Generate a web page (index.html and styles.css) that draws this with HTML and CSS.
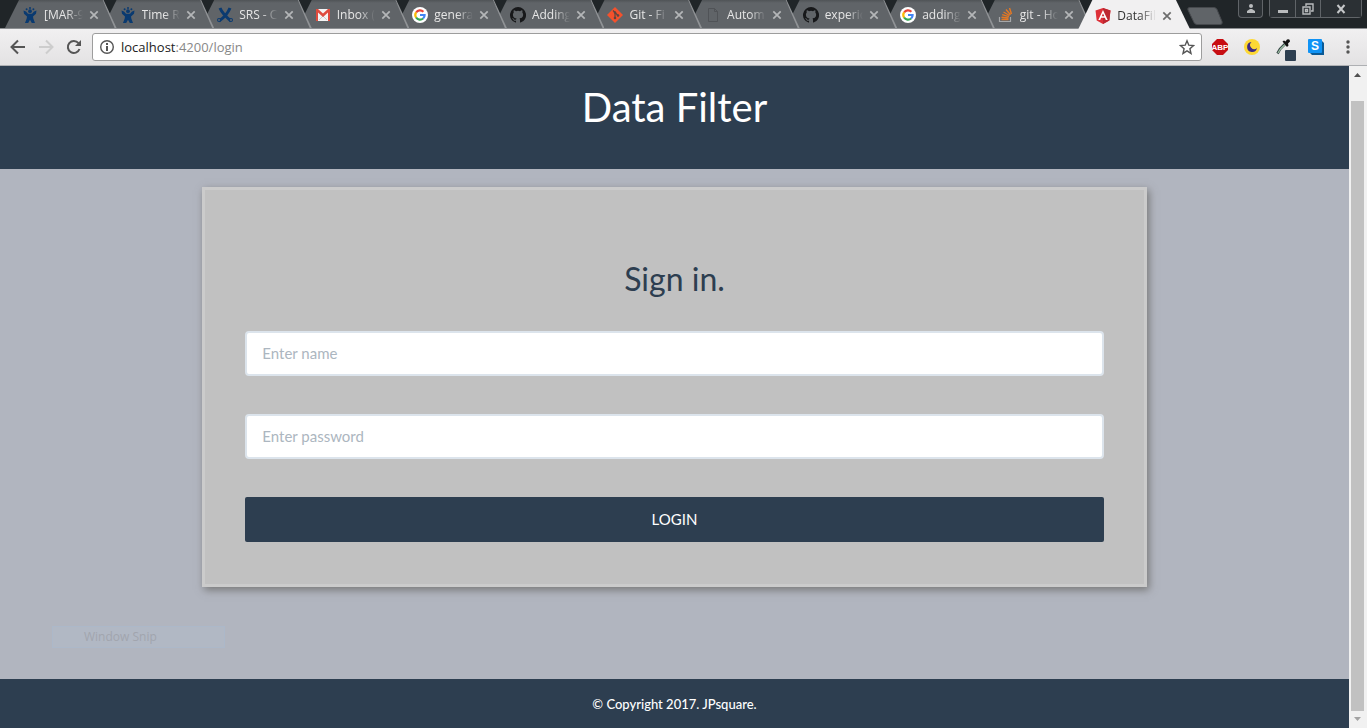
FILE: index.html
```html
<!DOCTYPE html>
<html lang="en">
<head>
<meta charset="utf-8">
<title>DataFilter</title>
<link rel="stylesheet" href="styles.css">
</head>
<body class="window">
<svg class="sprites" aria-hidden="true">
  <symbol id="jira" viewBox="0 0 16 16"><g fill="#0a3a70"><circle cx="8" cy="4.200" r="1.900"/><circle cx="4.600" cy="2.300" r="1"/><circle cx="8" cy="1" r="1"/><circle cx="11.400" cy="2.300" r="1"/><path d="M1.500 3.500L4 4.500l2 2.300h4l2-2.300 2.500-1-.5 3.200L11 9.500l.3 2L13 16h-3.200L8 12.800 6.200 16H3l1.700-4.500.3-2L2 6.700z"/></g></symbol>
  <symbol id="confluence" viewBox="0 0 16 16"><g fill="none" stroke="#0a3a70" stroke-width="3"><path d="M3 1c2 5 5 8 11 13M13 1C11 6 8 10 2 14"/></g><circle cx="2" cy="13" r="2" fill="#0a3a70"/><circle cx="14" cy="13" r="2" fill="#0a3a70"/><circle cx="2" cy="13" r="1" fill="#606468"/><circle cx="14" cy="13" r="1" fill="#606468"/></symbol>
  <symbol id="gmail" viewBox="0 0 16 16"><path fill="#f4f4f4" d="M1 2h14v12H1z"/><path fill="none" stroke="#ccc" d="M4 13l4-4 4 4"/><path fill="#df4b3e" d="M1 2h2l5 4.500L13 2h2v12h-2V5.500L8 10 3 5.500V14H1z"/></symbol>
  <symbol id="google" viewBox="0 0 16 16"><circle cx="8" cy="8" r="8" fill="#fff"/><g fill="none" stroke-width="2.200"><path stroke="#ea4335" d="M4.100 5.500A4.700 4.700 0 0 1 11.400 4.800"/><path stroke="#fbbc05" d="M4.100 10.600A4.700 4.700 0 0 1 4.100 5.400"/><path stroke="#34a853" d="M4.100 10.500A4.700 4.700 0 0 0 11.100 11.500"/><path stroke="#4285f4" d="M11.100 11.500A4.500 4.500 0 0 0 12.600 8H8"/></g></symbol>
  <symbol id="github" viewBox="0 0 16 16"><path fill="#17181a" fill-rule="evenodd" d="M8 0a8 8 0 0 0-2.530 15.590c.4.070.55-.17.550-.38v-1.490c-2.230.48-2.700-.95-2.700-.95-.36-.92-.89-1.170-.89-1.170-.73-.5.060-.49.060-.49.810.06 1.230.83 1.230.83.720 1.230 1.880.87 2.340.67.070-.52.280-.87.510-1.070-1.780-.2-3.640-.89-3.640-3.950 0-.87.310-1.590.82-2.150-.08-.2-.36-1.020.08-2.120 0 0 .67-.21 2.200.82a7.600 7.600 0 0 1 4 0c1.530-1.040 2.200-.82 2.200-.82.44 1.100.16 1.920.08 2.120.51.560.82 1.270.82 2.150 0 3.070-1.870 3.750-3.650 3.950.29.250.54.730.54 1.480v2.200c0 .21.150.46.550.38A8 8 0 0 0 8 0z"/></symbol>
  <symbol id="git" viewBox="0 0 16 16"><path fill="#f4512c" d="M8 0l8 8-8 8-8-8z"/><path fill="none" stroke="#5d4540" stroke-width="1.200" d="M6 3.500l2 2v6M8 5.500l3 3"/><circle cx="8" cy="5.500" r="1.200" fill="#5d4540"/><circle cx="8" cy="11" r="1.300" fill="#5d4540"/><circle cx="11" cy="8.500" r="1.300" fill="#5d4540"/></symbol>
  <symbol id="file" viewBox="0 0 16 16"><path fill="none" stroke="#505357" d="M3.500 1.500h6l3 3v10h-9zM9.500 1.500v3h3"/></symbol>
  <symbol id="stack" viewBox="0 0 16 16"><path fill="none" stroke="#a5a7a9" stroke-width="1.200" d="M1.500 10v4.500h11V10"/><path fill="none" stroke="#e47824" stroke-width="1.400" d="M3.500 12.500h7M3.500 10.200l7 .8M4.200 7.600l6.700 2M5.500 5l6 3.500M8 2.500l4.500 5.300M11.500 1l2 6"/></symbol>
  <symbol id="angular" viewBox="0 0 16 16"><path fill="#dd3038" d="M8 0l7.500 2.600-1.200 10L8 16l-6.300-3.400-1.200-10z"/><path fill="#bd2731" d="M8 0l7.500 2.600-1.200 10L8 16z"/><path fill="#fff" fill-rule="evenodd" d="M8 2l4.700 10h-1.900l-.9-2.300H6.100L5.200 12H3.300zm0 3.500L6.700 8.300h2.600z"/></symbol>
  <symbol id="cross" viewBox="0 0 10 10"><path fill="none" stroke="currentColor" stroke-width="1.700" d="M1.300 1.300l7.400 7.400M8.700 1.300L1.300 8.700"/></symbol>
</svg>

<header class="titlebar">
  <nav class="tabs" aria-label="Tabs">
    <div class="tab"><svg class="favicon"><use href="#jira"/></svg><span class="tab-title">[MAR-9</span><button class="close" aria-label="Close"><svg><use href="#cross"/></svg></button></div>
    <div class="tab"><svg class="favicon"><use href="#jira"/></svg><span class="tab-title">Time R</span><button class="close" aria-label="Close"><svg><use href="#cross"/></svg></button></div>
    <div class="tab"><svg class="favicon"><use href="#confluence"/></svg><span class="tab-title">SRS - C</span><button class="close" aria-label="Close"><svg><use href="#cross"/></svg></button></div>
    <div class="tab"><svg class="favicon"><use href="#gmail"/></svg><span class="tab-title">Inbox (</span><button class="close" aria-label="Close"><svg><use href="#cross"/></svg></button></div>
    <div class="tab"><svg class="favicon"><use href="#google"/></svg><span class="tab-title">genera</span><button class="close" aria-label="Close"><svg><use href="#cross"/></svg></button></div>
    <div class="tab"><svg class="favicon"><use href="#github"/></svg><span class="tab-title">Adding</span><button class="close" aria-label="Close"><svg><use href="#cross"/></svg></button></div>
    <div class="tab"><svg class="favicon"><use href="#git"/></svg><span class="tab-title">Git - Fi</span><button class="close" aria-label="Close"><svg><use href="#cross"/></svg></button></div>
    <div class="tab"><svg class="favicon"><use href="#file"/></svg><span class="tab-title">Autom</span><button class="close" aria-label="Close"><svg><use href="#cross"/></svg></button></div>
    <div class="tab"><svg class="favicon"><use href="#github"/></svg><span class="tab-title">experic</span><button class="close" aria-label="Close"><svg><use href="#cross"/></svg></button></div>
    <div class="tab"><svg class="favicon"><use href="#google"/></svg><span class="tab-title">adding</span><button class="close" aria-label="Close"><svg><use href="#cross"/></svg></button></div>
    <div class="tab"><svg class="favicon"><use href="#stack"/></svg><span class="tab-title">git - Ho</span><button class="close" aria-label="Close"><svg><use href="#cross"/></svg></button></div>
    <div class="tab active"><svg class="favicon"><use href="#angular"/></svg><span class="tab-title">DataFil</span><button class="close" aria-label="Close"><svg><use href="#cross"/></svg></button></div>
  </nav>
  <button class="new-tab" aria-label="New tab"><svg viewBox="0 0 36 18"><path fill="#606468" stroke="#46494d" d="M3 .5h24q2 0 3 2l5 12q1 3-2 3H10q-2 0-3-2L1 3Q0 .5 3 .5z"/></svg></button>
  <div class="controls">
    <button class="control user" aria-label="User"><svg viewBox="0 0 12 12"><circle cx="6" cy="3" r="2" fill="#b9bbbd"/><path fill="#b9bbbd" d="M2 10V8l3-2h2l3 2v2z"/></svg></button>
    <div class="control-group">
      <button class="control" aria-label="Minimize"><svg viewBox="0 0 12 12"><path fill="#b9bbbd" d="M1 7h10v3H1z"/></svg></button>
      <button class="control" aria-label="Restore"><svg viewBox="0 0 12 12"><path fill="none" stroke="#b9bbbd" stroke-width="1.400" d="M4 3V1h7v7H9M1 4h7v7H1zM3.500 6.500h2v2h-2z"/></svg></button>
      <button class="control wide" aria-label="Close window"><svg viewBox="0 0 12 12"><path fill="none" stroke="#c5c7c9" stroke-width="2" d="M2.500 2l7 8M9.500 2l-7 8"/></svg></button>
    </div>
  </div>
</header>

<div class="toolbar">
  <button class="tool" aria-label="Back"><svg viewBox="0 0 16 16"><path fill="none" stroke="#555" stroke-width="2" d="M15 8H2M8 1.500L1.500 8 8 14.500"/></svg></button>
  <button class="tool" aria-label="Forward"><svg viewBox="0 0 16 16"><path fill="none" stroke="#cdcdcd" stroke-width="2" d="M1 8h13M8 1.500L14.500 8 8 14.500"/></svg></button>
  <button class="tool" aria-label="Reload"><svg viewBox="0 0 16 16"><path fill="none" stroke="#555" stroke-width="2" d="M13.500 10A6 6 0 1 1 12.500 4.200"/><path fill="#555" d="M15 1v6H9z"/></svg></button>
  <div class="address">
    <svg class="info" viewBox="0 0 16 16"><circle cx="8" cy="8" r="6.300" fill="none" stroke="#555" stroke-width="1.400"/><path fill="#555" d="M7 4h2v2H7zM7 7h2v5H7z"/></svg>
    <a class="url" href="#"><span class="host">localhost</span>:4200/login</a>
    <button class="star" aria-label="Bookmark"><svg viewBox="0 0 16 16"><path fill="none" stroke="#555" stroke-width="1.400" d="M8 1.800l1.800 4.400 4.700.4-3.600 3.100 1.100 4.700L8 11.900l-4 2.500 1.100-4.700L1.500 6.600l4.700-.4z"/></svg></button>
  </div>
  <div class="extensions">
    <button class="extension" aria-label="Adblock"><svg viewBox="0 0 16 16"><path fill="#c70d12" d="M5 0h6l5 5v6l-5 5H5l-5-5V5z"/><text class="abp" x="8" y="11" text-anchor="middle">ABP</text></svg></button>
    <button class="extension" aria-label="Night mode"><svg viewBox="0 0 16 16"><circle cx="8" cy="8" r="8" fill="#fdd835"/><path fill="#3f2a82" d="M7.500 3A5 5 0 1 0 13 9 4 4 0 0 1 7.500 3z"/></svg></button>
    <button class="extension picker" aria-label="Color picker"><svg viewBox="0 0 21 22"><path fill="none" stroke="#344" stroke-width="2.600" d="M1.500 14.500L4 10l5-5"/><path fill="none" stroke="#9fc0a4" stroke-width="1.200" d="M2 14l2.500-4L9 5.500"/><path fill="#111" d="M6.500 2.500l1.500-1 1.500 1L11 .5q3-1 3 2l-2 2 .5 2-1.500 1.500z"/><rect x="9" y="11" width="11" height="11" rx="1" fill="#2d3e50"/></svg></button>
    <button class="extension" aria-label="Shortcuts"><svg viewBox="0 0 16 16"><path fill="#0a5a96" d="M2 2h12l2 2v12H4l-2-2z"/><rect width="14" height="14" rx="1" fill="#1093f5"/><text class="ess" x="7" y="11" text-anchor="middle">S</text></svg></button>
    <button class="extension menu" aria-label="Menu"><svg viewBox="0 0 16 16"><g fill="#555"><circle cx="8" cy="3" r="1.700"/><circle cx="8" cy="8" r="1.700"/><circle cx="8" cy="13" r="1.700"/></g></svg></button>
  </div>
</div>

<div class="viewport">
  <div class="page">
    <header class="banner"><h1>Data Filter</h1></header>
    <main class="content">
      <form class="card">
        <h2>Sign in.</h2>
        <input class="field" type="text" aria-label="Name" placeholder="Enter name">
        <input class="field" type="password" aria-label="Password" placeholder="Enter password">
        <button class="login" type="button">LOGIN</button>
      </form>
      <div class="snip">Window Snip</div>
    </main>
    <footer class="footer">© Copyright 2017. JPsquare.</footer>
  </div>
  <div class="scrollbar" aria-hidden="true">
    <svg viewBox="0 0 17 17"><path fill="#505050" d="M5 11h7L8.500 7z"/></svg>
    <div class="track"><div class="thumb"></div></div>
    <svg viewBox="0 0 17 17"><path fill="#a3a3a3" d="M5 6h7l-3.500 4z"/></svg>
  </div>
</div>
</body>
</html>
```
FILE: styles.css
```css
* { box-sizing: border-box; }

.window {
  margin: 0;
  min-height: 100vh;
  display: flex;
  flex-direction: column;
  background: #f1f1f1;
  font-family: "Open Sans", sans-serif;
  font-size: 12px;
}

button {
  margin: 0;
  padding: 0;
  border: 0;
  background: none;
  font: inherit;
  color: inherit;
}

svg { display: block; }
.sprites { position: absolute; width: 0; height: 0; }

/* Title bar */
.titlebar {
  display: flex;
  height: 29px;
  padding: 0 5px;
  background: #202528;
  border-bottom: 1px solid #8c8f92;
}

.tabs { display: flex; flex: 1; min-width: 0; height: 29px; }

.tab {
  position: relative;
  display: flex;
  align-items: center;
  flex: 1 1 0;
  min-width: 0;
  margin-right: -14px;
  padding: 2px 18px 0 17px;
  height: 28px;
  color: #e6e6e6;
}

.tab::before {
  content: "";
  position: absolute;
  inset: 0;
  z-index: 0;
  background: linear-gradient(#505457, #606468 3px);
  clip-path: polygon(14px 0, calc(100% - 14px) 0, 100% 100%, 0 100%);
}

.tab::after {
  content: "";
  position: absolute;
  inset: 0;
  z-index: 1;
  background: #909396;
  clip-path: polygon(calc(100% - 14px) 0, calc(100% - 13px) 0, 100% 100%, calc(100% - 2px) 100%);
}

.tab > * { position: relative; z-index: 2; }
.favicon { flex: none; width: 16px; height: 16px; }

.tab-title {
  flex: 1;
  min-width: 0;
  margin: 0 4px 0 6px;
  white-space: nowrap;
  line-height: 16px;
  mask-image: linear-gradient(to right, #000 55%, transparent 95%);
}

.close { flex: none; color: #b4b6b8; }
.close svg { width: 10px; height: 10px; }

.active { flex-basis: 2px; margin-right: 0; height: 29px; color: #333; }
.active::before { z-index: 3; background: #f1f0f1; }
.active::after { display: none; }
.active > * { z-index: 4; }
.active .close { color: #6c6c6c; }

.new-tab { align-self: flex-start; margin: 7px 16px 0 -3px; }
.new-tab svg { width: 36px; height: 18px; }

.controls { display: flex; gap: 6px; height: 18px; margin-left: -1px; }
.control-group { display: flex; border: 1px solid #606468; border-top: 0; border-radius: 0 0 4px 4px; }
.control { display: grid; place-items: center; width: 25px; background: #2b3034; }
.control svg { width: 12px; height: 12px; }
.control + .control { border-left: 1px solid #606468; }
.control.wide { width: 41px; }
.user { border: 1px solid #606468; border-top: 0; border-radius: 0 0 4px 4px; }

/* Toolbar */
.toolbar {
  display: flex;
  align-items: center;
  gap: 12px;
  height: 37px;
  padding: 0 10px;
  background: linear-gradient(#f1f0f1, #e3e2e3);
  border-bottom: 1px solid #aeb0b3;
}

.tool svg, .info, .star svg, .extension svg { width: 16px; height: 16px; }

.address {
  display: flex;
  align-items: center;
  flex: 1;
  height: 28px;
  margin-left: -2px;
  padding: 0 6px;
  background: #fff;
  border: 1px solid #9d9d9d;
  border-radius: 3px;
}

.url {
  flex: 1;
  margin-left: 6px;
  color: #888;
  font-size: 13px;
  line-height: 18px;
  text-decoration: none;
}

.host { color: #222; }
.extensions { display: flex; gap: 16px; margin: 0 1px 0 -2px; }
.extension.picker svg { width: 21px; height: 22px; margin-bottom: -6px; }
.picker { margin-right: -5px; height: 16px; }
.abp { font: bold 8px "Liberation Sans", sans-serif; fill: #fff; }
.ess { font: bold 12px "Liberation Sans", sans-serif; fill: #fff; }

/* Page */
.viewport { display: flex; flex: 1; }

.page {
  display: flex;
  flex: 1;
  flex-direction: column;
  background: #b1b5bf;
  color: #2d3e50;
  font-family: Lato, sans-serif;
  font-size: 15px;
}

.banner { padding: 20px 0 40px; background: #2d3e50; color: #fff; text-align: center; }
.banner h1 { margin: 0; font-size: 40px; font-weight: 400; line-height: 43px; }
.content { position: relative; flex: 1; padding: 18px 0; }

.card {
  display: flex;
  flex-direction: column;
  width: 70%;
  margin: 0 auto;
  padding: 71px 40px 42px;
  background: #c1c1c1;
  border: 3px solid #cbcbcb;
  box-shadow: 2px 3px 8px #777;
}

.card h2 { margin: 0 0 35px; font-size: 32px; font-weight: 400; line-height: 35px; text-align: center; }

.field {
  height: 45px;
  margin: 0 0 38px;
  padding: 0 15px 2px;
  background: #fff;
  border: 2px solid #dce4ec;
  border-radius: 4px;
  color: #2d3e50;
  font: inherit;
}

.field::placeholder { color: #acb6c0; opacity: 1; }
.login { height: 45px; padding-bottom: 2px; background: #2d3e50; border-radius: 2px; color: #fff; }

.snip {
  position: absolute;
  left: 52px;
  bottom: 31px;
  width: 173px;
  padding-left: 31px;
  background: #b1b8c4;
  border: 1px solid #acb8c9;
  color: #a1a5ae;
  font: 12px/20px "Open Sans", sans-serif;
}

.footer { padding: 16px 0 15px; background: #2d3e50; color: #fff; font-size: 13px; font-weight: 500; line-height: 18px; text-align: center; }

/* Scrollbar */
.scrollbar { display: flex; flex-direction: column; width: 18px; padding-right: 1px; background: #f1f1f1; }
.scrollbar svg { width: 17px; height: 17px; }
.track { flex: 1; padding: 18px 2px 0; display: flex; }
.thumb { flex: 1; background: #c1c1c1; }
```
